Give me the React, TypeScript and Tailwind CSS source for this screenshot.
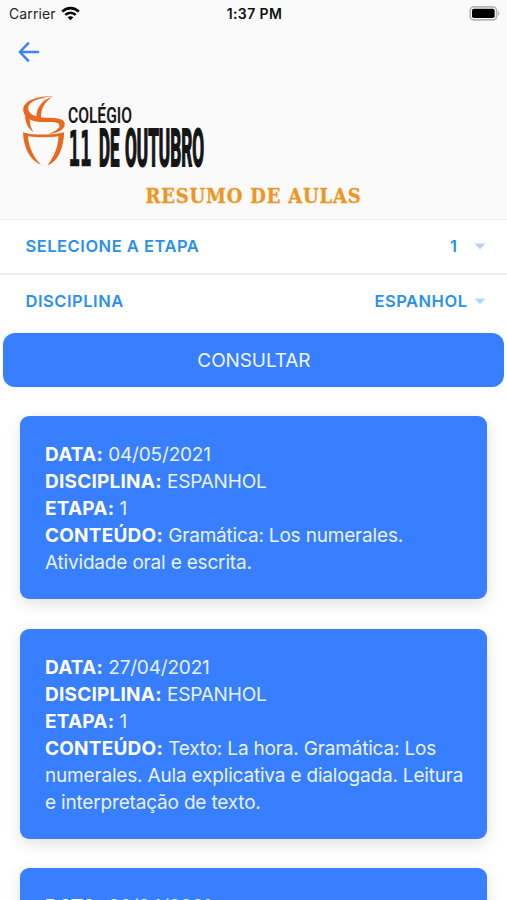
import type { ReactNode } from 'react';

interface Lesson {
  data: string;
  disciplina: string;
  etapa: number;
  conteudo: string;
}

const lessons: Lesson[] = [
  { data: '04/05/2021', disciplina: 'ESPANHOL', etapa: 1, conteudo: 'Gramática: Los numerales. Atividade oral e escrita.' },
  { data: '27/04/2021', disciplina: 'ESPANHOL', etapa: 1, conteudo: 'Texto: La hora. Gramática: Los numerales. Aula explicativa e dialogada. Leitura e interpretação de texto.' },
  { data: '20/04/2021', disciplina: 'ESPANHOL', etapa: 1, conteudo: 'Los numerales.' },
];

export default function App() {
  return (
    <div className="h-[900px] w-full overflow-hidden bg-white font-['Inter',sans-serif]">
      <header className="h-[220px] border-b border-[#f2f2f2] bg-[#fafafa]">
        <StatusBar />
        <div className="flex h-[48px] items-center pl-[17px]">
          <button aria-label="Voltar">
            <BackArrow />
          </button>
        </div>
        <div className="h-[94px] pl-[16px] pt-[10px]">
          <Logo />
        </div>
        <h1 className="mt-[11px] text-center font-['DejaVu_Serif_Condensed','DejaVu_Serif',serif] text-[20px] font-bold leading-[30px] tracking-[0.8px] text-[#ee961f] [-webkit-text-stroke:0.3px_#ee961f]">
          RESUMO DE AULAS
        </h1>
      </header>

      <SelectRow label="SELECIONE A ETAPA">
        <span className="mr-[10px]">1</span>
      </SelectRow>
      <div className="h-[2px] bg-[#eeeeee]" />
      <SelectRow label="DISCIPLINA">ESPANHOL</SelectRow>

      <div className="pl-[3.4px] pr-[2.6px] pt-[4.5px]">
        <button className="h-[54px] w-full rounded-[12px] bg-[#387fff] pt-[2.5px] text-[19px] tracking-[-0.1px] text-[#f0f6ff]">
          CONSULTAR
        </button>
      </div>

      <main className="flex flex-col gap-[29.5px] pl-[20.4px] pr-[19.6px] pt-[29.5px]">
        {lessons.map((lesson) => (
          <LessonCard key={lesson.data} lesson={lesson} />
        ))}
      </main>
    </div>
  );
}

function StatusBar() {
  return (
    <div className="grid h-[28px] grid-cols-3 items-center pl-[9px] pr-[7px] text-[14px] text-[#222]">
      <div className="-mt-px flex items-center gap-[6px]">
        <span className="tracking-[0.1px]">Carrier</span>
        <svg className="-ml-px" width="19" height="15" viewBox="0 0 19 15" fill="none" stroke="#000" strokeWidth="2.7">
          <path d="M1.2 5.6C6 .9 13 .9 17.8 5.6" />
          <path d="M4.3 8.9C7.3 6 11.7 6 14.7 8.9" />
          <path d="M9.5 14.2 6.6 11.2C8.2 9.8 10.8 9.8 12.4 11.2Z" fill="#000" stroke="none" />
        </svg>
      </div>
      <span className="-mt-px text-center font-semibold tracking-[0.4px] text-[#111]">1:37 PM</span>
      <svg className="-mt-[2px] justify-self-end" width="31" height="15" viewBox="0 0 31 15">
        <rect x="1.2" y=".9" width="26.4" height="13" rx="3.6" fill="#fafafa" stroke="#b5b5b5" strokeWidth="1.6" />
        <rect x="3" y="2.8" width="22.6" height="9.2" rx="1.8" fill="#000" />
        <path d="M29 5.2C31 5.9 31 8.9 29 9.6Z" fill="#b5b5b5" />
      </svg>
    </div>
  );
}

function BackArrow() {
  return (
    <svg width="24" height="24" viewBox="0 0 24 24" fill="none" stroke="#3f80f5" strokeWidth="2.5" strokeLinecap="round" strokeLinejoin="round">
      <path d="M11.2 3.4 2.8 12l8.4 8.6M3 12h18" />
    </svg>
  );
}

function Logo() {
  return (
    <svg className="overflow-visible" width="194" height="84" viewBox="0 0 194 84" role="img" aria-label="Colégio 11 de Outubro">
      {/* cup */}
      <g fill="#e8681f">
        <path d="M38 10C22 10 7.5 14 7.2 23.5C7.2 30 13 34.8 22 35.8C30 36.5 43.5 34.5 43.5 39.5C43.5 43 38 46 32.5 48C40 47.5 49 44 48.8 38C48.5 32 40 32 30 31.8C20 31.5 12.2 28.5 12.2 22C12.2 15.5 23 12 38 10Z" />
        <path d="M36 11C28 13 19.5 21 20.5 32L25 33C24.5 23 28.5 16 36 11Z" />
        <path d="M9.2 29.5L13.8 33.5C13.8 38 15 42.5 17.5 46C12.5 43 9 37 9.2 29.5Z" />
        <path d="M7 46.2C12.5 48.5 22 48.6 30 48.6C38 48.4 44 47.3 48.2 46.2C47.5 62 42.5 75 31.5 79.5C38 70 42 62 42.5 50.2C33 51.5 22 51.8 11.8 50.3C13 62 18 71.5 25 79C14 74 7.5 62 7 46.2Z" />
      </g>
      <g fill="#151515" stroke="#151515" fontFamily="Roboto, sans-serif" fontWeight="700">
        <text x="52" y="36.5" fontSize="22.5" fontWeight="500" strokeWidth=".2" textLength="64" lengthAdjust="spacingAndGlyphs">COLÉGIO</text>
        <text x="52.5" y="80" fontSize="50" strokeWidth=".7" textLength="23" lengthAdjust="spacingAndGlyphs" fontFamily="'DejaVu Sans Mono', monospace">11</text>
        <text x="83" y="79.5" fontSize="51" strokeWidth="2" textLength="20.5" lengthAdjust="spacingAndGlyphs">DE</text>
        <text x="109" y="79.5" fontSize="51" strokeWidth="2" textLength="79" lengthAdjust="spacingAndGlyphs">OUTUBRO</text>
      </g>
    </svg>
  );
}

function SelectRow({ label, children }: { label: string; children: ReactNode }) {
  return (
    <div className="flex h-[53px] items-center justify-between pl-[25.5px] pr-[21px] text-[16.5px] font-semibold tracking-[0.52px] text-[#2a90f0]">
      <span>{label}</span>
      <div className="flex items-center gap-[6.5px]">
        <span>{children}</span>
        <svg width="12" height="7" viewBox="0 0 12 7" fill="#b5d7f9">
          <path d="M.5.5h11L6 6.5z" />
        </svg>
      </div>
    </div>
  );
}

function LessonCard({ lesson }: { lesson: Lesson }) {
  return (
    <article className="rounded-[9px] bg-[#387fff] pb-[23px] pl-[24.6px] pr-[18px] pt-[25px] text-[19px] leading-[27px] text-[#e9f2ff] shadow-[0_5px_16px_rgba(0,0,0,0.12)]">
      <Field name="DATA" value={lesson.data} />
      <Field name="DISCIPLINA" value={lesson.disciplina} />
      <Field name="ETAPA" value={lesson.etapa} />
      <Field name="CONTEÚDO" value={lesson.conteudo} />
    </article>
  );
}

function Field({ name, value }: { name: string; value: string | number }) {
  return (
    <p className="tracking-[-0.18px]">
      <strong className="font-bold tracking-[0.22px] text-white">{name}:</strong> {value}
    </p>
  );
}
